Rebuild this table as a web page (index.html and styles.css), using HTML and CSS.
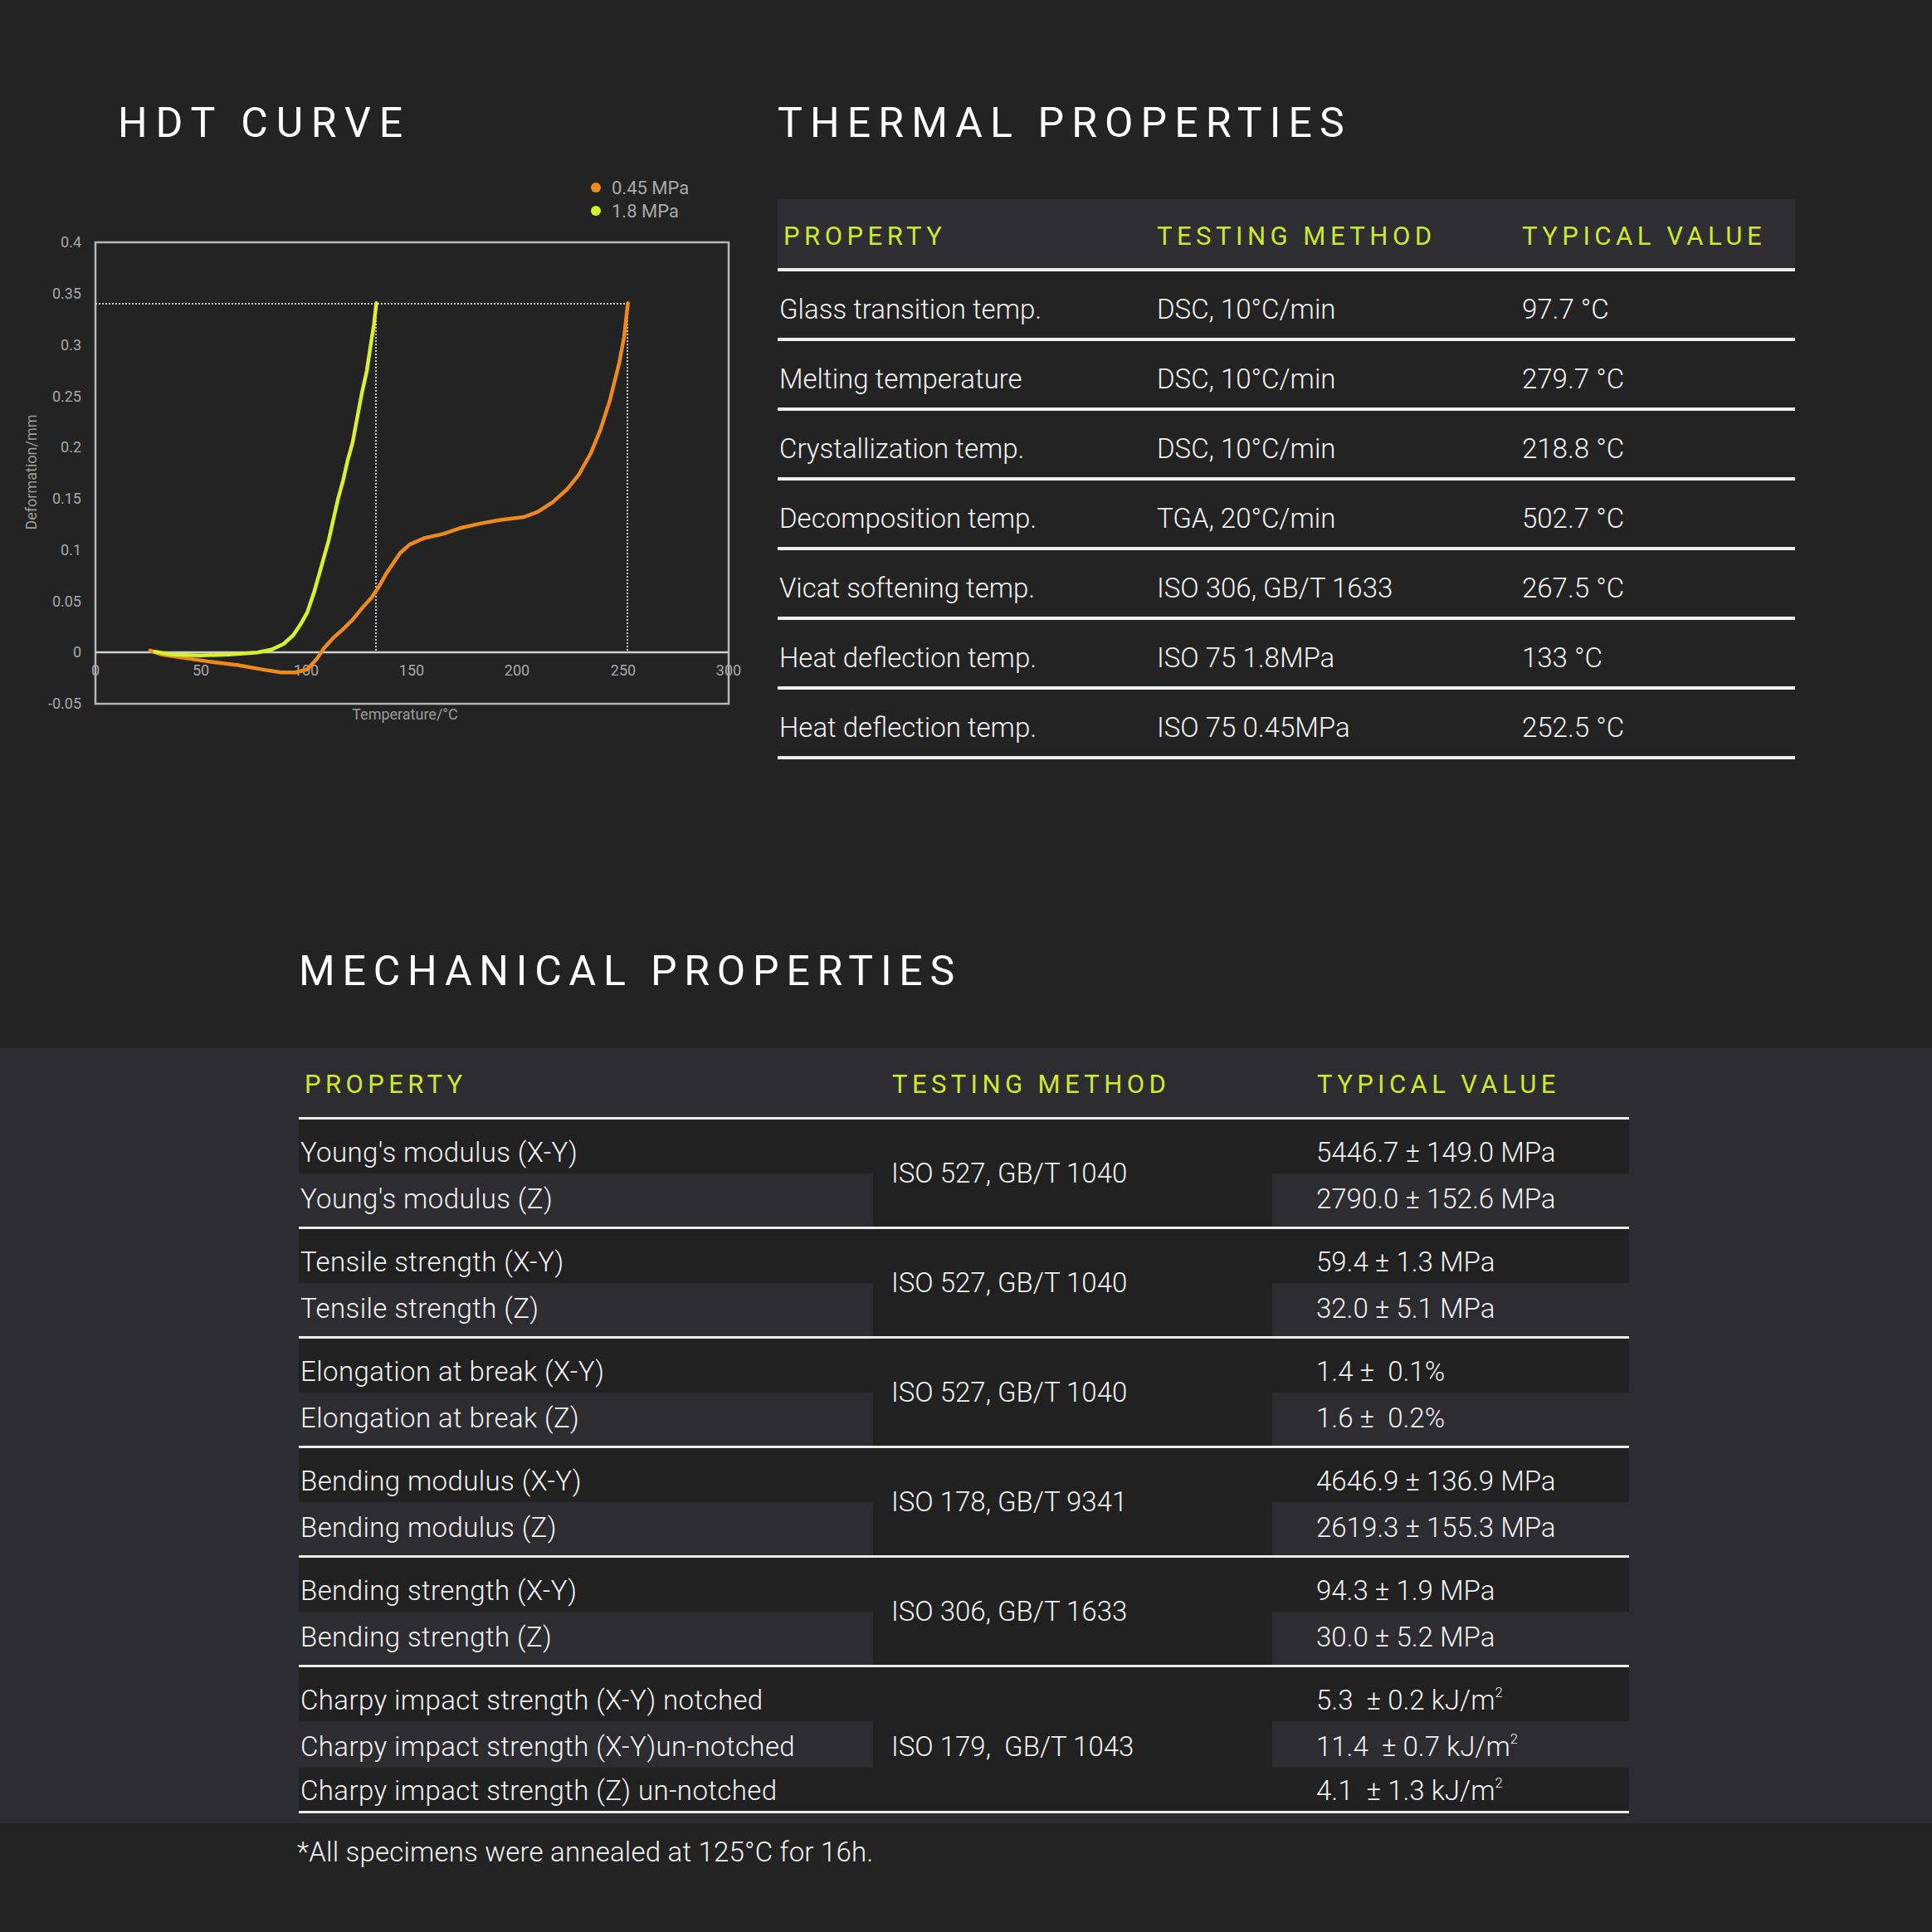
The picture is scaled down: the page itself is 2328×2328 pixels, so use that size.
FILE: index.html
```html
<!DOCTYPE html>
<html lang="en">
<head>
<meta charset="utf-8">
<title>HDT curve, thermal and mechanical properties</title>
<link rel="stylesheet" href="styles.css">
</head>
<body>
<div class="top">
  <section class="hdt">
    <h2 class="title hdt-title">HDT CURVE</h2>
    <svg class="chart" width="930" height="700" viewBox="0 190 930 700">
      <circle class="dot-o" cx="718" cy="226" r="6"/>
      <text class="legend" x="737" y="234">0.45 MPa</text>
      <circle class="dot-y" cx="718" cy="254" r="6"/>
      <text class="legend" x="737" y="262">1.8 MPa</text>

      <rect class="frame" x="115" y="292" width="763" height="556"/>
      <line class="zero" x1="115" y1="786" x2="878" y2="786"/>

      <line class="dots" x1="115" y1="366" x2="757" y2="366"/>
      <line class="dots" x1="453" y1="366" x2="453" y2="786"/>
      <line class="dots" x1="756" y1="366" x2="756" y2="786"/>

      <g class="ylab">
        <text x="98" y="298">0.4</text>
        <text x="98" y="360">0.35</text>
        <text x="98" y="422">0.3</text>
        <text x="98" y="484">0.25</text>
        <text x="98" y="545">0.2</text>
        <text x="98" y="607">0.15</text>
        <text x="98" y="669">0.1</text>
        <text x="98" y="731">0.05</text>
        <text x="98" y="792">0</text>
        <text x="98" y="854">-0.05</text>
      </g>
      <g class="xlab">
        <text x="115" y="814">0</text>
        <text x="242" y="814">50</text>
        <text x="369" y="814">100</text>
        <text x="496" y="814">150</text>
        <text x="623" y="814">200</text>
        <text x="751" y="814">250</text>
        <text x="878" y="814">300</text>
      </g>
      <text class="axis-title" x="488" y="867">Temperature/°C</text>
      <text class="axis-title" x="38" y="575" transform="rotate(-90 38 569)">Deformation/mm</text>

      <polyline class="curve-o" points="180.8,783.7 195.2,788.8 212.4,791.3 229.6,793.9 258.3,798 287,801.5 315.7,806.6 338.7,810.2 355.9,810.2 370.3,806.6 381.7,793.9 390.4,781.1 401.8,768.4 413.3,758.2 424.8,746.9 436.3,732.7 447.8,719.9 456.4,707.1 465,691.8 473.6,679.1 482.2,666.3 493.7,656.1 510.9,648.5 533.9,643.4 556.8,635.7 579.8,630.6 602.8,626.5 631.5,623 648.7,616.3 665.9,605.1 683.1,589.8 697.5,571.9 711.8,546.4 723.3,518.4 734.8,482.7 746.3,436.7 752,406.1 756.6,365.3"/>
      <polyline class="curve-y" points="186.6,785.2 206.7,788.8 241.1,789.8 275.5,788.8 310,786.2 327.2,782.7 341.6,776 353,765.8 361.7,753.1 370.3,737.8 378.9,712.2 387.5,681.6 396.1,651 401.8,625.5 407.6,600 413.3,579.6 419.1,554.1 424.8,533.7 430.5,503.1 436.3,472.4 442,446.9 446.6,416.3 450.6,390.8 453.5,365.3"/>
    </svg>
  </section>

  <section class="thermal">
    <h2 class="title">THERMAL PROPERTIES</h2>
    <div class="ttable">
      <div class="trow thead"><span class="c1">PROPERTY</span><span>TESTING METHOD</span><span>TYPICAL VALUE</span></div>
      <div class="trow"><span>Glass transition temp.</span><span>DSC, 10°C/min</span><span>97.7 °C</span></div>
      <div class="trow"><span>Melting temperature</span><span>DSC, 10°C/min</span><span>279.7 °C</span></div>
      <div class="trow"><span>Crystallization temp.</span><span>DSC, 10°C/min</span><span>218.8 °C</span></div>
      <div class="trow"><span>Decomposition temp.</span><span>TGA, 20°C/min</span><span>502.7 °C</span></div>
      <div class="trow"><span>Vicat softening temp.</span><span>ISO 306, GB/T 1633</span><span>267.5 °C</span></div>
      <div class="trow"><span>Heat deflection temp.</span><span>ISO 75 1.8MPa</span><span>133 °C</span></div>
      <div class="trow"><span>Heat deflection temp.</span><span>ISO 75 0.45MPa</span><span>252.5 °C</span></div>
    </div>
  </section>
</div>

<section class="mech">
  <h2 class="title mech-title">MECHANICAL PROPERTIES</h2>
  <div class="band">
    <div class="mtable">
      <div class="mhead"><span class="h1">PROPERTY</span><span class="h2">TESTING METHOD</span><span class="h3">TYPICAL VALUE</span></div>

      <div class="grp">
        <div class="p ra">Young's modulus (X-Y)</div>
        <div class="m m2">ISO 527, GB/T 1040</div>
        <div class="v ra">5446.7 ± 149.0 MPa</div>
        <div class="p rb">Young's modulus (Z)</div>
        <div class="v rb">2790.0 ± 152.6 MPa</div>
      </div>

      <div class="grp">
        <div class="p ra">Tensile strength (X-Y)</div>
        <div class="m m2">ISO 527, GB/T 1040</div>
        <div class="v ra">59.4 ± 1.3 MPa</div>
        <div class="p rb">Tensile strength (Z)</div>
        <div class="v rb">32.0 ± 5.1 MPa</div>
      </div>

      <div class="grp">
        <div class="p ra">Elongation at break (X-Y)</div>
        <div class="m m2">ISO 527, GB/T 1040</div>
        <div class="v ra">1.4 ±&nbsp; 0.1%</div>
        <div class="p rb">Elongation at break (Z)</div>
        <div class="v rb">1.6 ±&nbsp; 0.2%</div>
      </div>

      <div class="grp">
        <div class="p ra">Bending modulus (X-Y)</div>
        <div class="m m2">ISO 178, GB/T 9341</div>
        <div class="v ra">4646.9 ± 136.9 MPa</div>
        <div class="p rb">Bending modulus (Z)</div>
        <div class="v rb">2619.3 ± 155.3 MPa</div>
      </div>

      <div class="grp">
        <div class="p ra">Bending strength (X-Y)</div>
        <div class="m m2">ISO 306, GB/T 1633</div>
        <div class="v ra">94.3 ± 1.9 MPa</div>
        <div class="p rb">Bending strength (Z)</div>
        <div class="v rb">30.0 ± 5.2 MPa</div>
      </div>

      <div class="grp">
        <div class="p ra">Charpy impact strength (X-Y) notched</div>
        <div class="m m3">ISO 179,&nbsp; GB/T 1043</div>
        <div class="v ra">5.3&nbsp; ± 0.2 kJ/m<sup>2</sup></div>
        <div class="p rc">Charpy impact strength (X-Y)un-notched</div>
        <div class="v rc">11.4&nbsp; ± 0.7 kJ/m<sup>2</sup></div>
        <div class="p rd">Charpy impact strength (Z) un-notched</div>
        <div class="v rd">4.1&nbsp; ± 1.3 kJ/m<sup>2</sup></div>
      </div>
    </div>
  </div>
  <p class="note">*All specimens were annealed at 125°C for 16h.</p>
</section>
</body>
</html>
```

FILE: styles.css
```css
html {
  background: #232323;
}

body {
  margin: 0;
  min-height: 2328px;
  background: #232323;
  color: #f3f3f3;
  font-family: Roboto, "Liberation Sans", sans-serif;
}

.title {
  margin: 0;
  font-family: Roboto, "Liberation Sans", sans-serif;
  font-weight: 400;
  font-size: 50px;
  line-height: 60px;
  letter-spacing: 9.1px;
  color: #ffffff;
  white-space: nowrap;
}

/* ---------- top section ---------- */
.top {
  display: flex;
  padding-top: 118px;
}

.hdt {
  width: 937px;
  flex: none;
}

.hdt-title {
  padding-left: 142px;
  letter-spacing: 9.8px;
}

.chart {
  display: block;
  margin-top: 12px;
}

.chart text {
  font-family: Roboto, "Liberation Sans", sans-serif;
  font-weight: 400;
  fill: #a9a9a9;
}

.legend {
  font-size: 22px;
  fill: #9c9c9c;
}

.dot-o {
  fill: #ef8d1f;
}

.dot-y {
  fill: #d4f02a;
}

.frame {
  fill: none;
  stroke: #b6b6b6;
  stroke-width: 2.5;
}

.zero {
  stroke: #cfcfcf;
  stroke-width: 2.5;
}

.dots {
  stroke: #c9c9c9;
  stroke-width: 2;
  stroke-dasharray: 2 2;
}

.ylab text {
  font-size: 18px;
  text-anchor: end;
}

.xlab text {
  font-size: 18px;
  text-anchor: middle;
}

.chart .axis-title {
  font-size: 18px;
  text-anchor: middle;
  fill: #9d9d9d;
}

.curve-o,
.curve-y {
  fill: none;
  stroke-width: 4.5;
  stroke-linejoin: round;
  stroke-linecap: round;
}

.curve-o {
  stroke: #ee8a1c;
}

.curve-y {
  stroke: #d6f22c;
}

/* ---------- thermal table ---------- */
.thermal {
  width: 1226px;
  flex: none;
}

.ttable {
  margin-top: 62px;
}

.trow {
  display: grid;
  grid-template-columns: 455px 440px 331px;
  box-sizing: border-box;
  padding: 13px 0 1px;
  line-height: 66px;
  height: 84px;
  border-bottom: 4px solid #efefef;
  font-size: 33px;
  font-weight: 300;
  color: #f3f3f3;
  white-space: nowrap;
}

.trow span {
  padding-left: 2px;
}

.trow.thead {
  height: 87px;
  padding: 6px 0 0;
  align-items: center;
  line-height: 40px;
  background: #2e2e33;
  font-size: 31px;
  font-weight: 400;
  letter-spacing: 5.5px;
  color: #cfe82b;
}

.trow.thead .c1 {
  padding-left: 7px;
}

/* ---------- mechanical ---------- */
.mech {
  margin-top: 225px;
}

.mech-title {
  padding-left: 360px;
  letter-spacing: 8.8px;
}

.band {
  margin-top: 63px;
  background: #2c2c31;
  padding: 0 0 12px 360px;
}

.mtable {
  width: 1603px;
}

.mhead {
  display: grid;
  grid-template-columns: 692px 481px 430px;
  align-items: center;
  box-sizing: border-box;
  height: 86px;
  padding-top: 4px;
  border-bottom: 3px solid #ececec;
  font-size: 31px;
  line-height: 40px;
  letter-spacing: 5.4px;
  color: #cfe82b;
  white-space: nowrap;
}

.mhead .h1 {
  padding-left: 7px;
}

.mhead .h2 {
  padding-left: 23px;
}

.mhead .h3 {
  padding-left: 54px;
}

.grp {
  display: grid;
  grid-template-columns: 692px 481px 430px;
  border-bottom: 3px solid #ececec;
  font-size: 33px;
  font-weight: 300;
  line-height: 50px;
  color: #f3f3f3;
  white-space: nowrap;
}

.grp .p {
  grid-column: 1;
  padding-left: 2px;
  letter-spacing: 0.4px;
}

.grp .v {
  grid-column: 3;
  padding-left: 53px;
}

.grp .m {
  grid-column: 2;
  grid-row: 1 / span 2;
  display: flex;
  align-items: center;
  padding-left: 22px;
  background: #212122;
}

.grp .m3 {
  grid-row: 1 / span 3;
  padding-top: 18px;
}

.ra {
  grid-row: 1;
  padding-top: 15px;
  height: 50px;
  background: #212122;
}

.rb {
  grid-row: 2;
  padding: 6px 0 8px;
}

.rc {
  grid-row: 2;
  padding: 6px 0 0;
}

.rd {
  grid-row: 3;
  padding-top: 4px;
  line-height: 48px;
  background: #212122;
}

sup {
  font-size: 0.5em;
  line-height: 0;
  vertical-align: 0.9em;
}

.note {
  margin: 10px 0 0;
  padding-left: 358px;
  font-size: 33px;
  font-weight: 300;
  line-height: 50px;
  letter-spacing: 0.2px;
  color: #f3f3f3;
}
```
